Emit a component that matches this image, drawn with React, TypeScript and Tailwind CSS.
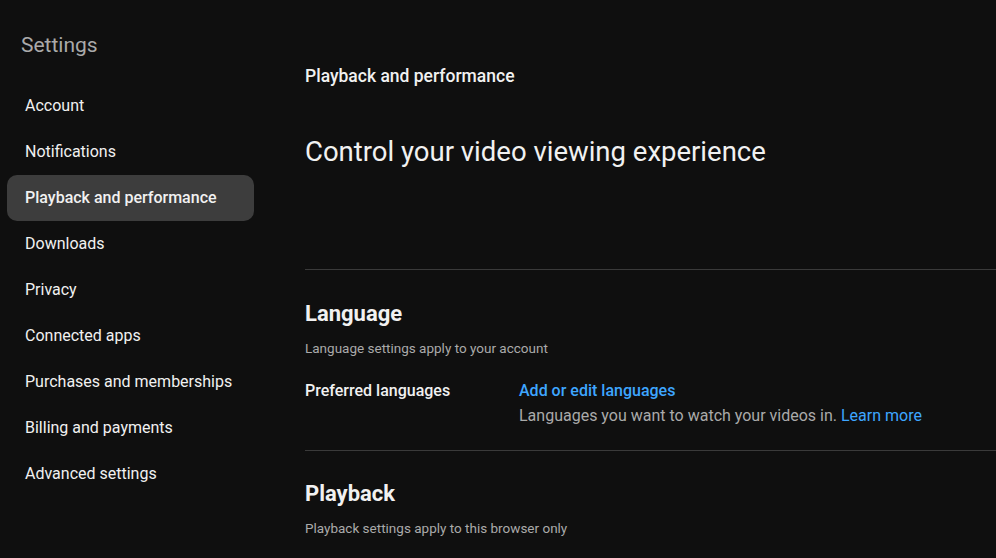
export default function App() {
  const items = ["Account","Notifications","Playback and performance","Downloads","Privacy","Connected apps","Purchases and memberships","Billing and payments","Advanced settings"];
  return (
    <div className="w-[996px] h-[558px] overflow-hidden bg-[#0f0f0f] text-[#f1f1f1] flex" style={{fontFamily:"Roboto, 'Noto Sans', sans-serif"}}>
      <div className="w-[305px] shrink-0 pl-[7px]">
        <div className="pl-[14px] pt-[30px] h-[83px] text-[21px] text-[#aaaaaa]">Settings</div>
        <div className="flex flex-col">
          {items.map((t,i)=>(
            <div key={t} className={`w-[247px] h-[46px] flex items-center pl-[18px] text-[16px] rounded-[10px] ${i===2?"bg-[#3d3d3d] font-medium":""}`}>{t}</div>
          ))}
        </div>
      </div>
      <div className="flex-1">
        <div className="pt-[63px] text-[17.5px] font-medium h-[132px]">Playback and performance</div>
        <div className="text-[27.5px] leading-[40px] h-[137px]">Control your video viewing experience</div>
        <div className="border-t border-[#3a3a3a] pt-[29px] pb-[22px]">
          <div className="text-[22px] font-bold leading-[30px]">Language</div>
          <div className="text-[13.5px] text-[#aaaaaa] mt-[9px]">Language settings apply to your account</div>
          <div className="flex mt-[21px]">
            <div className="w-[214px] text-[16px] font-medium">Preferred languages</div>
            <div>
              <div className="text-[16px] font-medium text-[#3ea6ff]">Add or edit languages</div>
              <div className="text-[16px] text-[#aaaaaa] mt-[1px]">Languages you want to watch your videos in. <span className="text-[#3ea6ff]">Learn more</span></div>
            </div>
          </div>
        </div>
        <div className="border-t border-[#3a3a3a] pt-[28px]">
          <div className="text-[22px] font-bold leading-[30px]">Playback</div>
          <div className="text-[13.5px] text-[#aaaaaa] mt-[9px]">Playback settings apply to this browser only</div>
        </div>
      </div>
    </div>
  );
}
